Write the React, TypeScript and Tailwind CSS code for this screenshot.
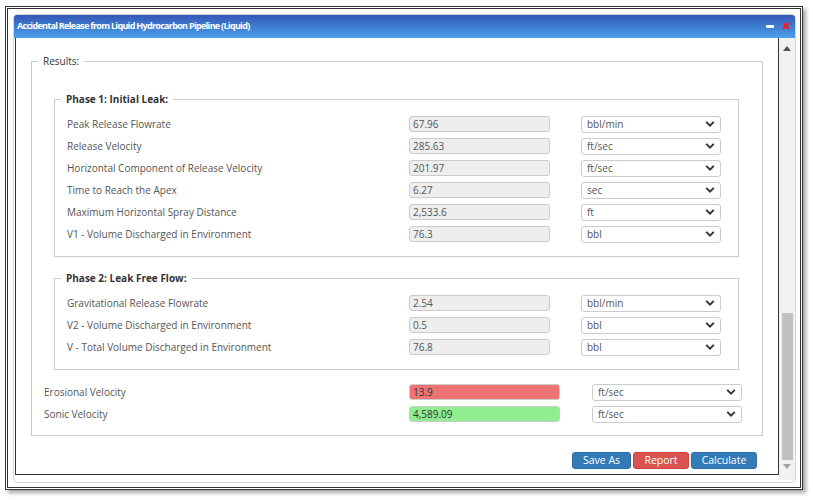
import React from "react";

type Item = { label: string; value: string; unit: string };

const phase1: Item[] = [
  { label: "Peak Release Flowrate", value: "67.96", unit: "bbl/min" },
  { label: "Release Velocity", value: "285.63", unit: "ft/sec" },
  { label: "Horizontal Component of Release Velocity", value: "201.97", unit: "ft/sec" },
  { label: "Time to Reach the Apex", value: "6.27", unit: "sec" },
  { label: "Maximum Horizontal Spray Distance", value: "2,533.6", unit: "ft" },
  { label: "V1 - Volume Discharged in Environment", value: "76.3", unit: "bbl" },
];

const phase2: Item[] = [
  { label: "Gravitational Release Flowrate", value: "2.54", unit: "bbl/min" },
  { label: "V2 - Volume Discharged in Environment", value: "0.5", unit: "bbl" },
  { label: "V - Total Volume Discharged in Environment", value: "76.8", unit: "bbl" },
];

function Chevron() {
  return (
    <svg className="pointer-events-none absolute right-[6px] top-1/2 -translate-y-1/2" width="10" height="7" viewBox="0 0 10 7">
      <path d="M1.2 1.4 L5 5.2 L8.8 1.4" fill="none" stroke="#333" strokeWidth="1.9" />
    </svg>
  );
}

function UnitSelect({ unit }: { unit: string }) {
  return (
    <div className="relative h-[17px]">
      <select
        defaultValue={unit}
        className="block h-full w-full appearance-none rounded-[3px] border border-[#cccccc] bg-white pl-[5px] text-[10px] leading-[15px] text-[#555] outline-none"
      >
        <option value={unit}>{unit}</option>
      </select>
      <Chevron />
    </div>
  );
}

function Value({ value, tone }: { value: string; tone?: string }) {
  return (
    <div
      className={`h-[16px] rounded-[3px] border border-[#cccccc] px-[3px] text-[10px] leading-[14px] ${
        tone === "red" ? "bg-[#f07373] text-[#333]" : tone === "green" ? "bg-[#90ee90] text-[#333]" : "bg-[#eeeeee] text-[#555]"
      }`}
    >
      {value}
    </div>
  );
}

function PhaseRow({ item }: { item: Item }) {
  return (
    <div className="grid h-[22px] grid-cols-[311px_141px_140px] items-center gap-x-[31px]">
      <span className="text-[10px] text-[#555]">{item.label}</span>
      <Value value={item.value} />
      <UnitSelect unit={item.unit} />
    </div>
  );
}

function Phase({ title, items, className }: { title: string; items: Item[]; className: string }) {
  return (
    <fieldset className={`mr-[23px] ml-[22px] min-w-0 border border-[#cccccc] pb-[11px] ${className}`}>
      <legend className="ml-[6px] px-[5px] text-[10px] leading-[14px] font-bold text-[#333]">{title}</legend>
      <div className="pt-[7px] pl-[12px]">
        {items.map((it) => (
          <PhaseRow key={it.label} item={it} />
        ))}
      </div>
    </fieldset>
  );
}

function BottomRow({ label, value, tone }: { label: string; value: string; tone: string }) {
  return (
    <div className="grid h-[22px] grid-cols-[333px_151px_150px] items-center gap-x-[32px]">
      <span className="text-[10px] text-[#555]">{label}</span>
      <Value value={value} tone={tone} />
      <UnitSelect unit="ft/sec" />
    </div>
  );
}

export default function App() {
  return (
    <div className="h-[500px] w-[813px] overflow-hidden bg-white pt-[6px] pl-[5px] font-['Open_Sans',sans-serif]">
      {/* screenshot frame */}
      <div className="h-[484px] w-[798px] border-[3px] border-double border-[#333] pt-[5px] pl-[5px] shadow-[3px_3px_4px_rgba(0,0,0,0.35)]">
        {/* dialog */}
        <div className="flex h-[469px] w-[783px] flex-col overflow-hidden rounded-[4px] border border-[#d6d6d6]">
          <div className="-mx-[1px] -mt-[1px] flex h-[24px] items-center justify-between rounded-t-[4px] bg-gradient-to-b from-[#3453b4] to-[#4aa3ea] pr-[6px] pl-[4px]">
            <span className="text-[9px] font-bold tracking-[-0.7px] text-white">
              Accidental Release from Liquid Hydrocarbon Pipeline (Liquid)
            </span>
            <div className="flex items-center gap-[8px]">
              <span className="h-[3px] w-[8px] rounded-[1px] bg-white" />
              <svg width="8" height="8" viewBox="0 0 8 8">
                <path d="M1 1 L7 7 M7 1 L1 7" stroke="#ff1a1a" strokeWidth="2.2" />
              </svg>
            </div>
          </div>

          <div className="flex flex-1">
            <div className="pl-[1px]">
              {/* content area */}
              <div className="flex h-[437px] w-[764px] flex-col border-x border-b border-[#333] pt-[16px]">
                <fieldset className="mr-[15px] ml-[15px] min-w-0 border border-[#cccccc] pb-[10px]">
                  <legend className="ml-[6px] px-[5px] text-[10px] leading-[14px] text-[#333]">Results:</legend>
                  <Phase title="Phase 1: Initial Leak:" items={phase1} className="mt-[24px]" />
                  <Phase title="Phase 2: Leak Free Flow:" items={phase2} className="mt-[14px]" />
                  <div className="mt-[11px] pl-[12px]">
                    <BottomRow label="Erosional Velocity" value="13.9" tone="red" />
                    <BottomRow label="Sonic Velocity" value="4,589.09" tone="green" />
                  </div>
                </fieldset>
                <div className="mt-[16px] mr-[21px] flex justify-end gap-[2px]">
                  <button className="h-[17px] w-[59px] rounded-[3px] border border-[#2e6da4] bg-[#337ab7] text-[10.5px] leading-[15px] text-white">
                    Save As
                  </button>
                  <button className="h-[17px] w-[56px] rounded-[3px] border border-[#d43f3a] bg-[#d9534f] text-[10.5px] leading-[15px] text-white">
                    Report
                  </button>
                  <button className="h-[17px] w-[66px] rounded-[3px] border border-[#2e6da4] bg-[#337ab7] text-[10.5px] leading-[15px] text-white">
                    Calculate
                  </button>
                </div>
              </div>
            </div>

            {/* scrollbar */}
            <div className="flex h-[442px] w-[16px] flex-col items-center bg-[#f1f1f1] pt-[8px]">
              <svg width="8" height="5" viewBox="0 0 8 5">
                <path d="M0 5 L4 0 L8 5 Z" fill="#505050" />
              </svg>
              <div className="mt-[262px] h-[147px] w-[11px] bg-[#c1c1c1]" />
              <svg className="mt-[4px]" width="8" height="5" viewBox="0 0 8 5">
                <path d="M0 0 L8 0 L4 5 Z" fill="#a3a3a3" />
              </svg>
            </div>
          </div>
        </div>
      </div>
    </div>
  );
}
